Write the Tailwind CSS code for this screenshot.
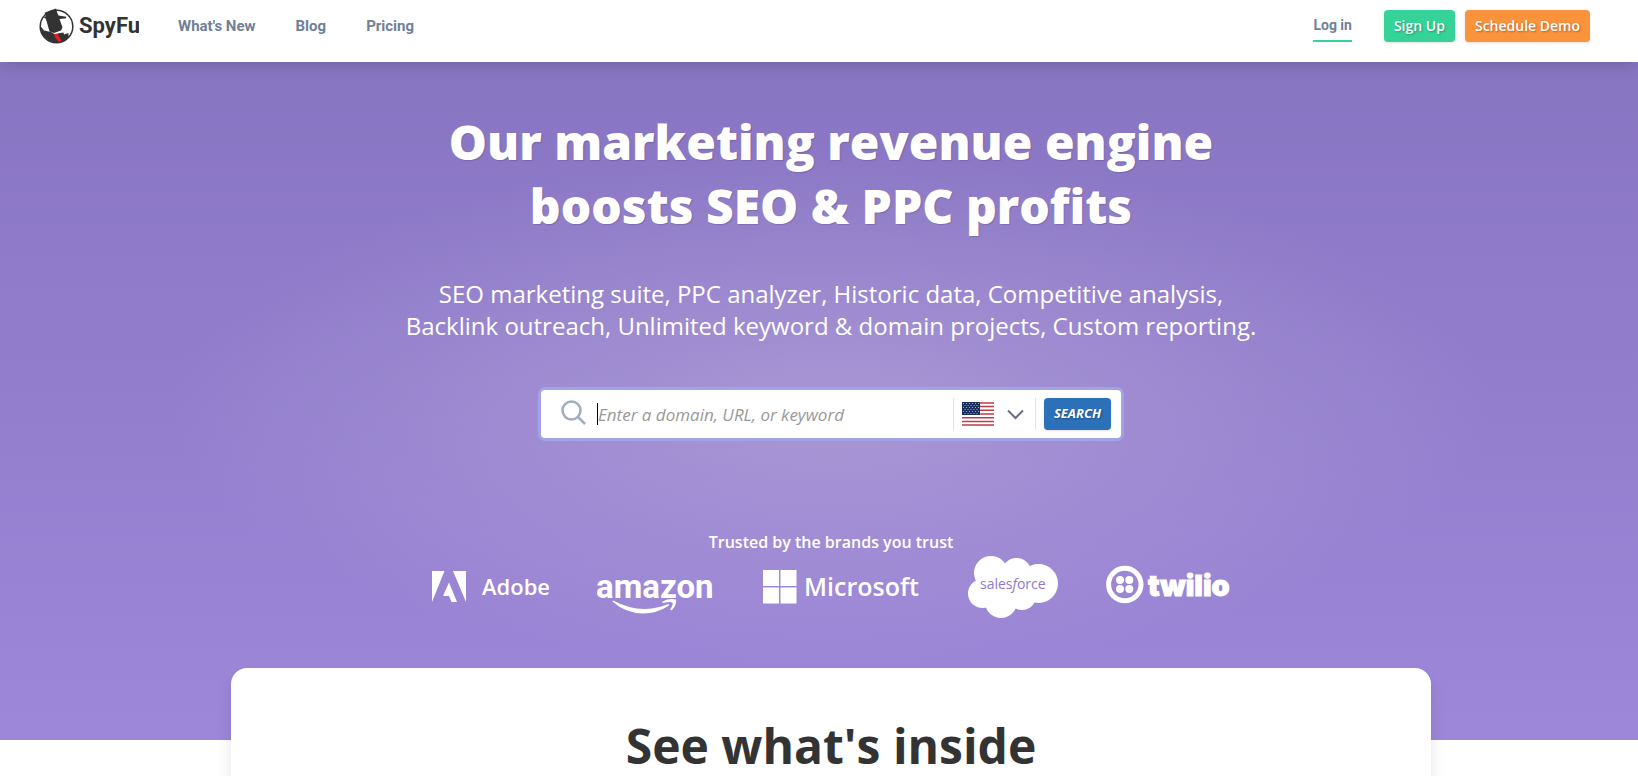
<!DOCTYPE html>
<html lang="en">
<head>
<meta charset="utf-8">
<meta name="viewport" content="width=device-width, initial-scale=1">
<title>SpyFu</title>
<script src="https://cdn.jsdelivr.net/npm/@tailwindcss/browser@4"></script>
</head>
<body class="overflow-x-hidden bg-white font-['Open_Sans',sans-serif] text-[#333333]">

<header class="relative z-10 flex h-[62px] items-start justify-between bg-white pr-12 pl-[39px] shadow-[0_2px_16px_rgba(0,0,0,0.16)]">
  <div class="flex items-center pt-2">
    <a href="#" aria-label="SpyFu home" class="mr-[39px] block">
      <svg width="100" height="36" viewBox="0 0 100 36" class="block">
        <circle cx="17.500" cy="18.500" r="16.300" fill="#fff" stroke="#333" stroke-width="1.500"/>
        <path d="M5.500 4.800L17 .5L18.500 5.500L19.500 7.500L27.500 8.800L26.500 10.500L20.500 11L23.500 19.500L22 22.500L15 25L10.500 23.500L7.500 13L6.800 10.800L4.800 9.500L7 8Z" fill="#333"/>
        <path d="M1.500 18L5 22.500L12 24L15.500 26L24.500 24.500L25 26.500L29.500 25L29.500 29.500Q24 35.500 16 34.800Q4.500 33 1.500 21Z" fill="#333"/>
        <path d="M15 26L18.500 26L22.500 33L20 34L16.500 30Z" fill="#ed1c24"/>
        <text x="40" y="25" font-family="Roboto, sans-serif" font-weight="700" font-size="22" fill="#333">SpyFu</text>
      </svg>
    </a>
    <nav class="flex gap-10 font-['Roboto',sans-serif] text-[15px] leading-6 font-bold text-[#718096]">
      <a href="#">What's New</a>
      <a href="#">Blog</a>
      <a href="#">Pricing</a>
    </nav>
  </div>
  <div class="flex items-start pt-[10px]">
    <a href="#" class="mr-8 h-8 border-b-2 border-[#34d399] font-['Roboto',sans-serif] text-sm leading-[30px] font-bold text-[#718096]">Log in</a>
    <button type="button" class="mr-[10px] h-8 rounded bg-[#36d399] px-[10px] text-sm leading-8 font-semibold text-white shadow-sm [text-shadow:1px_1px_2px_rgba(0,0,0,0.3)]">Sign Up</button>
    <button type="button" class="h-8 rounded bg-[#fb923c] px-[10px] text-sm leading-8 font-semibold text-white shadow-sm [text-shadow:1px_1px_2px_rgba(0,0,0,0.3)]">Schedule Demo</button>
  </div>
</header>

<main>
  <section class="bg-[radial-gradient(ellipse_660px_260px_at_calc(50%+12px)_350px,rgba(183,167,218,0.6),rgba(183,167,218,0)),linear-gradient(#8875c2,#9d87d9)] pt-12 pb-[122px] pl-6 text-center text-white">
    <h1 class="text-5xl leading-[64px] font-extrabold [text-shadow:1px_1px_1px_rgba(0,0,0,0.15)]">Our marketing revenue engine<br>boosts SEO &amp; PPC profits</h1>
    <p class="mt-10 text-2xl leading-8">SEO marketing suite, PPC analyzer, Historic data, Competitive analysis,<br>Backlink outreach, Unlimited keyword &amp; domain projects, Custom reporting.</p>

    <form class="mx-auto mt-12 flex h-12 max-w-[580px] items-center rounded bg-white pr-[10px] pl-5 ring-3 ring-[#a0a4e6]">
      <svg width="26" height="28" viewBox="0 0 26 28" fill="none" stroke="#a0aec0" stroke-width="2.500" class="mr-[10px] shrink-0"><circle cx="10.500" cy="10.500" r="9"/><path d="M17 17l7 7"/></svg>
      <div class="relative flex min-w-0 flex-1 items-center">
        <span class="absolute left-0 h-[22px] w-px bg-black"></span>
        <input type="text" aria-label="Domain, URL, or keyword" placeholder="Enter a domain, URL, or keyword" class="h-8 w-full pl-px text-[17px] text-[#333333] italic outline-none placeholder:text-[#999999]">
      </div>
      <div class="relative flex h-8 items-center gap-[13px] border-x border-[#e2e2e6] pr-[11px] pl-2">
        <svg width="32" height="24" viewBox="0 0 32 24">
          <path fill="#fff" d="M0 0h32v24H0z"/>
          <path stroke="#bd3d44" stroke-width="1.500" d="M0 .9h32M0 4.600h32M0 8.300h32M0 12h32M0 15.700h32M0 19.400h32M0 23.100h32"/>
          <path fill="#192f5d" d="M0 0h18v13H0z"/>
          <path stroke="#fff" stroke-opacity=".6" stroke-width="1" stroke-dasharray="1 2" d="M1 1.500h17M2.500 3.500h15M1 5.500h17M2.500 7.500h15M1 9.500h17M2.500 11.500h15"/>
        </svg>
        <svg width="17" height="11" viewBox="0 0 17 11" fill="none" stroke="#667085" stroke-width="2"><path d="M1 1.500l7.500 7.500L16 1.500"/></svg>
        <select aria-label="Country" class="absolute inset-0 cursor-pointer opacity-0"><option>United States</option><option>United Kingdom</option></select>
      </div>
      <button type="submit" class="ml-2 h-8 rounded bg-[#2b70b8] px-[10px] text-[13px] font-bold text-white italic shadow-sm [text-shadow:1px_1px_2px_rgba(0,0,0,0.3)]">SEARCH</button>
    </form>

    <p class="mt-[92px] text-base leading-6 font-semibold">Trusted by the brands you trust</p>

    <div class="mt-0.5 flex flex-wrap items-center justify-center gap-12">
      <svg role="img" aria-label="Adobe" width="117" height="62" viewBox="0 0 117 62" fill="#fff">
        <path d="M0 15h12.500L0 46zM21 15h13v31zM17 26.500L25 46h-5.500l-2.500-6h-6z"/>
        <text x="50" y="39" font-family="'Open Sans', sans-serif" font-weight="600" font-size="22">Adobe</text>
      </svg>
      <svg role="img" aria-label="Amazon" width="118" height="62" viewBox="0 0 118 62" fill="#fff">
        <text x="-1" y="42" font-family="Roboto, sans-serif" font-weight="700" font-size="33">amazon</text>
        <path d="M16 44.500Q43 59 70 48.500Q73 47.500 72 49.500Q60 57.500 46 57.500Q28 57 15.500 45.500Z"/>
        <path d="M65 46Q71 41.500 79 43.500Q80 49 75 54Q73 54.500 73.500 53Q76.500 48 75.500 46.500Q73 45.500 66 47Z"/>
      </svg>
      <svg role="img" aria-label="Microsoft" width="157" height="62" viewBox="0 0 157 62" fill="#fff">
        <path d="M0 14h16v16H0zM17.500 14h16v16h-16zM0 31.500h16v16H0zM17.500 31.500h16v16h-16z"/>
        <text x="41" y="40" font-family="'Open Sans', sans-serif" font-weight="600" font-size="25">Microsoft</text>
      </svg>
      <svg role="img" aria-label="Salesforce" width="90" height="62" viewBox="0 0 90 62" fill="#fff">
        <circle cx="23" cy="17" r="17"/><circle cx="48.500" cy="17" r="15"/><circle cx="70.500" cy="27.500" r="19.500"/><circle cx="14.500" cy="37.500" r="14.500"/><circle cx="33" cy="46" r="16"/><circle cx="54" cy="40" r="14"/><path d="M14 20h56v24H14z"/>
        <text x="12" y="33" font-family="'Open Sans', sans-serif" font-size="14" font-weight="500" fill="#8f79cc">sales<tspan font-style="italic">f</tspan>orce</text>
      </svg>
      <svg role="img" aria-label="Twilio" width="125" height="62" viewBox="0 0 125 62" fill="#fff">
        <circle cx="18.800" cy="28.500" r="16.200" fill="none" stroke="#fff" stroke-width="5"/>
        <circle cx="14" cy="24" r="4"/><circle cx="23.300" cy="24" r="4"/><circle cx="14" cy="33" r="4"/><circle cx="23.300" cy="33" r="4"/>
        <text x="42" y="40" font-family="Inter, sans-serif" font-weight="900" font-size="29" stroke="#fff" stroke-width="1">twilio</text>
      </svg>
    </div>
  </section>

  <div class="pl-6">
    <section class="relative mx-auto -mt-[72px] max-w-[1200px] rounded-2xl bg-white pt-[46px] pb-16 text-center shadow-[0_10px_15px_rgba(0,0,0,0.1)]">
      <h2 class="text-5xl leading-[64px] font-bold">See what's inside</h2>
    </section>
  </div>
</main>
</body>
</html>
